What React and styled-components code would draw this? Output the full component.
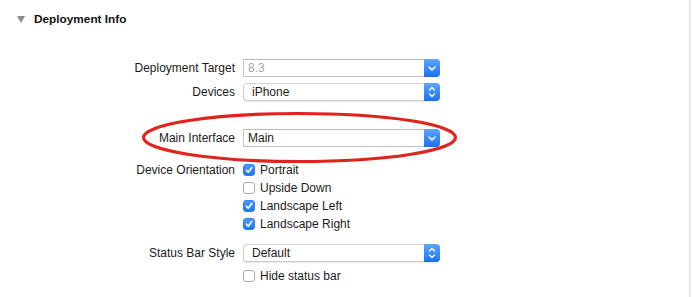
import styled, { createGlobalStyle } from "styled-components"

const Global = createGlobalStyle`
  html, body {
    margin: 0;
    padding: 0;
    background: #fff;
  }
  body {
    font-family: "Liberation Sans", Arial, sans-serif;
    font-size: 12px;
    color: #1b1b1b;
  }
`

const Page = styled.div`
  position: relative;
  display: flex;
  width: 692px;
  height: 297px;
  overflow: hidden;
  background: #fff;
`

const Content = styled.div`
  flex: 1;
  display: flex;
  flex-direction: column;
`

const Edge = styled.div`
  width: 2px;
  border-left: 1px solid #e2e2e2;
  background: #f3f3f3;
`

const Header = styled.div`
  height: 38px;
  display: flex;
  align-items: center;
  gap: 9px;
  padding-left: 17px;
  font-size: 11.8px;
  font-weight: bold;
  color: #111;
`

const Disclosure = styled.span`
  width: 0;
  height: 0;
  border-left: 4.5px solid transparent;
  border-right: 4.5px solid transparent;
  border-top: 7px solid #8c8c8c;
  margin-top: 1px;
`

const Row = styled.div`
  display: grid;
  grid-template-columns: 235px 197px;
  column-gap: 8px;
  align-items: center;
  height: 18px;
  margin-top: ${p => p.$gap || 0}px;
`

const Label = styled.div`
  text-align: right;
  white-space: nowrap;
`

const Field = styled.div`
  position: relative;
  display: flex;
  height: 18px;
  box-sizing: border-box;
  background: #fff;
  border: 1px solid ${p => (p.$popup ? "#c9c9c9" : "#c4c4c4")};
  border-top-color: ${p => (p.$popup ? "#d4d4d4" : "#b8b8b8")};
  border-radius: ${p => (p.$popup ? "4px" : "0 4px 4px 0")};
  box-shadow: ${p => (p.$popup ? "0 1px 0 rgba(0,0,0,0.08)" : "none")};
`

const Value = styled.div`
  flex: 1;
  display: flex;
  align-items: center;
  padding-left: ${p => (p.$popup ? 8 : 4)}px;
  color: ${p => (p.$disabled ? "#a6a6a6" : "#1b1b1b")};
`

const Arrow = styled.div`
  width: 16px;
  margin: -1px -1px -1px 0;
  display: flex;
  align-items: center;
  justify-content: center;
  border-radius: 0 4px 4px 0;
  background: linear-gradient(#5ea6fb, #1b72f1);
`

const CheckRow = styled.label`
  display: flex;
  align-items: center;
  gap: 5px;
  white-space: nowrap;
`

const Box = styled.span`
  width: 12px;
  height: 12px;
  box-sizing: border-box;
  border-radius: 3px;
  display: flex;
  align-items: center;
  justify-content: center;
  background: ${p => (p.$on ? "linear-gradient(#4a9cf9, #1f77f2)" : "#fff")};
  border: 1px solid ${p => (p.$on ? "#2a7ef0" : "#a9a9a9")};
`

const Annotation = styled.svg`
  position: absolute;
  left: 0;
  top: 0;
  pointer-events: none;
`

const Down = () => (
  <svg width="16" height="18" viewBox="0 0 16 18">
    <path d="M5 8 L8 11 L11 8" fill="none" stroke="#fff" strokeWidth="1.5" strokeLinecap="round" strokeLinejoin="round" />
  </svg>
)

const UpDown = () => (
  <svg width="16" height="18" viewBox="0 0 16 18">
    <path d="M5.5 7 L8 4.5 L10.5 7 M5.5 11 L8 13.5 L10.5 11" fill="none" stroke="#fff" strokeWidth="1.4" strokeLinecap="round" strokeLinejoin="round" />
  </svg>
)

const Tick = () => (
  <svg width="10" height="10" viewBox="0 0 10 10">
    <path d="M2.3 5.2 L4.2 7.2 L7.8 2.6" fill="none" stroke="#fff" strokeWidth="1.6" strokeLinecap="round" strokeLinejoin="round" />
  </svg>
)

const Select = ({ value, popup, disabled }) => (
  <Field $popup={popup}>
    <Value $popup={popup} $disabled={disabled}>{value}</Value>
    <Arrow>{popup ? <UpDown /> : <Down />}</Arrow>
  </Field>
)

const Check = ({ on, children }) => (
  <CheckRow>
    <Box $on={on}>{on && <Tick />}</Box>
    {children}
  </CheckRow>
)

const orientations = [
  { name: "Portrait", on: true },
  { name: "Upside Down", on: false },
  { name: "Landscape Left", on: true },
  { name: "Landscape Right", on: true },
]

export default function App() {
  return (
    <Page>
      <Global />
      <Content>
        <Header>
          <Disclosure />
          Deployment Info
        </Header>

        <Row $gap={21}>
          <Label>Deployment Target</Label>
          <Select value="8.3" disabled />
        </Row>
        <Row $gap={6}>
          <Label>Devices</Label>
          <Select value="iPhone" popup />
        </Row>
        <Row $gap={28}>
          <Label>Main Interface</Label>
          <Select value="Main" />
        </Row>

        {orientations.map((o, i) => (
          <Row key={o.name} $gap={i === 0 ? 14 : 0}>
            <Label>{i === 0 ? "Device Orientation" : ""}</Label>
            <Check on={o.on}>{o.name}</Check>
          </Row>
        ))}

        <Row $gap={11}>
          <Label>Status Bar Style</Label>
          <Select value="Default" popup />
        </Row>
        <Row $gap={5}>
          <Label />
          <Check>Hide status bar</Check>
        </Row>
      </Content>
      <Edge />

      <Annotation width="692" height="297">
        <ellipse cx="299.5" cy="137.5" rx="156" ry="24" fill="none" stroke="#e1241b" strokeWidth="3.2" />
      </Annotation>
    </Page>
  )
}
